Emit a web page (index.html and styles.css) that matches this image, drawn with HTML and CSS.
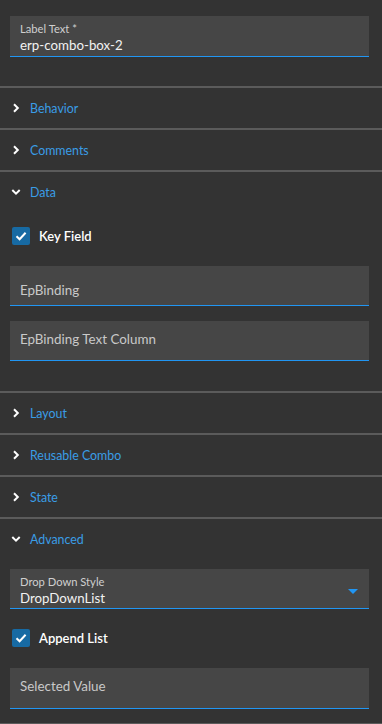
FILE: index.html
```html
<!DOCTYPE html>
<html>
<head>
<meta charset="utf-8">
<link rel="stylesheet" href="styles.css">
</head>
<body>
<div class="panel">
  <div class="top">
    <div class="field field-labeled">
      <div class="flabel">Label Text *</div>
      <div class="fvalue">erp-combo-box-2</div>
    </div>
  </div>

  <div class="section">
    <div class="shead"><svg class="chev" width="10" height="10" viewBox="0 0 10 10"><path d="M3 1.3 L6.8 5 L3 8.7" fill="none" stroke="#fff" stroke-width="2"/></svg><span>Behavior</span></div>
  </div>
  <div class="section">
    <div class="shead"><svg class="chev" width="10" height="10" viewBox="0 0 10 10"><path d="M3 1.3 L6.8 5 L3 8.7" fill="none" stroke="#fff" stroke-width="2"/></svg><span>Comments</span></div>
  </div>
  <div class="section">
    <div class="shead"><svg class="chev" width="10" height="10" viewBox="0 0 10 10"><path d="M1.3 3 L5 6.6 L8.7 3" fill="none" stroke="#fff" stroke-width="2"/></svg><span>Data</span></div>
    <div class="sbody data-body">
      <label class="check">
        <span class="box"><svg width="18" height="18" viewBox="0 0 18 18"><path d="M4.5 9.2 L7.6 12.2 L13.6 5.8" fill="none" stroke="#fff" stroke-width="2"/></svg></span>
        <span class="ctext">Key Field</span>
      </label>
      <div class="field field-ph low"><span class="ph">EpBinding</span></div>
      <div class="field field-ph"><span class="ph">EpBinding Text Column</span></div>
    </div>
  </div>
  <div class="section">
    <div class="shead"><svg class="chev" width="10" height="10" viewBox="0 0 10 10"><path d="M3 1.3 L6.8 5 L3 8.7" fill="none" stroke="#fff" stroke-width="2"/></svg><span>Layout</span></div>
  </div>
  <div class="section">
    <div class="shead"><svg class="chev" width="10" height="10" viewBox="0 0 10 10"><path d="M3 1.3 L6.8 5 L3 8.7" fill="none" stroke="#fff" stroke-width="2"/></svg><span>Reusable Combo</span></div>
  </div>
  <div class="section">
    <div class="shead"><svg class="chev" width="10" height="10" viewBox="0 0 10 10"><path d="M3 1.3 L6.8 5 L3 8.7" fill="none" stroke="#fff" stroke-width="2"/></svg><span>State</span></div>
  </div>
  <div class="section">
    <div class="shead"><svg class="chev" width="10" height="10" viewBox="0 0 10 10"><path d="M1.3 3 L5 6.6 L8.7 3" fill="none" stroke="#fff" stroke-width="2"/></svg><span>Advanced</span></div>
    <div class="sbody adv-body">
      <div class="field field-labeled dropdown">
        <div class="flabel">Drop Down Style</div>
        <div class="fvalue">DropDownList</div>
        <svg class="caret" width="10" height="6" viewBox="0 0 10 6"><path d="M0 0 H10 L5 5 Z" fill="#2196f3"/></svg>
      </div>
      <label class="check check-adv">
        <span class="box"><svg width="18" height="18" viewBox="0 0 18 18"><path d="M4.5 9.2 L7.6 12.2 L13.6 5.8" fill="none" stroke="#fff" stroke-width="2"/></svg></span>
        <span class="ctext">Append List</span>
      </label>
      <div class="field field-ph sel"><span class="ph">Selected Value</span></div>
    </div>
  </div>
  <div class="section"></div>
</div>
</body>
</html>
```

FILE: styles.css
```css
* { box-sizing: border-box; }
html, body {
  margin: 0;
  padding: 0;
  background: #333333;
  font-family: "Lato", "Open Sans", sans-serif;
  overflow: hidden;
}
.panel {
  width: 382px;
  height: 724px;
}
.top {
  padding: 16px 13px 29px 10px;
}
.field {
  position: relative;
  background: #464646;
  border-bottom: 1px solid #2196f3;
  height: 41px;
  padding: 0 10px;
}
.field-labeled {
  padding-top: 6px;
}
.flabel {
  font-size: 11.2px;
  line-height: 14px;
  color: #cfcfcf;
}
.fvalue {
  font-size: 13.3px;
  line-height: 18px;
  color: #f2f2f2;
}
.field-ph {
  height: 40px;
  padding-top: 7px;
}
.field-ph.low {
  padding-top: 13px;
}
.field-ph.sel {
  height: 41px;
}
.ph {
  font-size: 13.4px;
  line-height: 16px;
  color: #c9c9c9;
}
.section {
  border-top: 2px solid #5b5b5b;
}
.shead {
  height: 40px;
  display: flex;
  align-items: center;
  padding-left: 11px;
  color: #3a9de6;
  font-size: 12.4px;
}
.shead .chev {
  margin-right: 9px;
}
.sbody {
  padding: 0 13px 0 10px;
}
.data-body {
  padding-top: 15px;
  padding-bottom: 30px;
}
.check {
  display: flex;
  align-items: center;
  height: 18px;
  padding-left: 2px;
}
.box {
  width: 18px;
  height: 18px;
  border-radius: 2px;
  background: #176aa3;
  display: flex;
}
.ctext {
  margin-left: 9px;
  color: #ffffff;
  font-size: 13px;
  font-weight: 600;
}
.data-body .check {
  margin-bottom: 21px;
}
.data-body .field + .field {
  margin-top: 15px;
}
.adv-body {
  padding-top: 10px;
  padding-bottom: 14px;
}
.dropdown {
  height: 40px;
  padding-top: 6px;
}
.caret {
  position: absolute;
  right: 11px;
  top: 20px;
}
.check-adv {
  margin: 20px 0 21px;
}
```
